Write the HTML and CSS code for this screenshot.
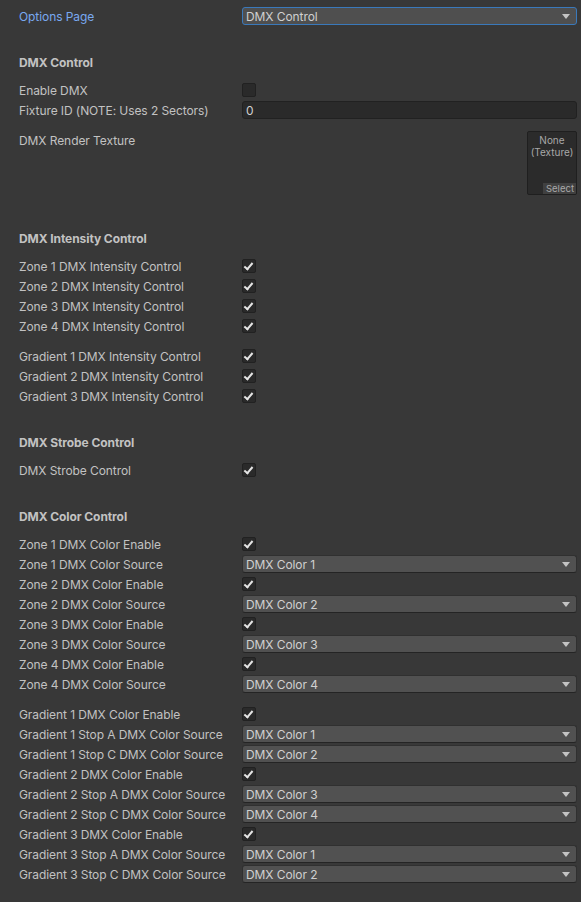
FILE: index.html
```html
<!DOCTYPE html>
<html>
<head>
<meta charset="utf-8">
<link rel="stylesheet" href="styles.css">
</head>
<body>
<div class="inspector">
  <div class="row">
    <span class="lbl focus">Options Page</span>
    <div class="dropdown focused">DMX Control<span class="arrow"></span></div>
  </div>

  <div class="header">DMX Control</div>
  <div class="row"><span class="lbl">Enable DMX</span><span class="check"></span></div>
  <div class="row"><span class="lbl">Fixture ID (NOTE: Uses 2 Sectors)</span><div class="textfield">0</div></div>
  <div class="row tex-row gap">
    <span class="lbl">DMX Render Texture</span>
    <div class="texfield">
      <div class="texname">None<br>(Texture)</div>
      <div class="texselect">Select</div>
    </div>
  </div>

  <div class="header after-tex">DMX Intensity Control</div>
  <div class="row"><span class="lbl">Zone 1 DMX Intensity Control</span><span class="check on"></span></div>
  <div class="row"><span class="lbl">Zone 2 DMX Intensity Control</span><span class="check on"></span></div>
  <div class="row"><span class="lbl">Zone 3 DMX Intensity Control</span><span class="check on"></span></div>
  <div class="row"><span class="lbl">Zone 4 DMX Intensity Control</span><span class="check on"></span></div>
  <div class="row gap"><span class="lbl">Gradient 1 DMX Intensity Control</span><span class="check on"></span></div>
  <div class="row"><span class="lbl">Gradient 2 DMX Intensity Control</span><span class="check on"></span></div>
  <div class="row"><span class="lbl">Gradient 3 DMX Intensity Control</span><span class="check on"></span></div>

  <div class="header">DMX Strobe Control</div>
  <div class="row"><span class="lbl">DMX Strobe Control</span><span class="check on"></span></div>

  <div class="header">DMX Color Control</div>
  <div class="row"><span class="lbl">Zone 1 DMX Color Enable</span><span class="check on"></span></div>
  <div class="row"><span class="lbl">Zone 1 DMX Color Source</span><div class="dropdown">DMX Color 1<span class="arrow"></span></div></div>
  <div class="row"><span class="lbl">Zone 2 DMX Color Enable</span><span class="check on"></span></div>
  <div class="row"><span class="lbl">Zone 2 DMX Color Source</span><div class="dropdown">DMX Color 2<span class="arrow"></span></div></div>
  <div class="row"><span class="lbl">Zone 3 DMX Color Enable</span><span class="check on"></span></div>
  <div class="row"><span class="lbl">Zone 3 DMX Color Source</span><div class="dropdown">DMX Color 3<span class="arrow"></span></div></div>
  <div class="row"><span class="lbl">Zone 4 DMX Color Enable</span><span class="check on"></span></div>
  <div class="row"><span class="lbl">Zone 4 DMX Color Source</span><div class="dropdown">DMX Color 4<span class="arrow"></span></div></div>

  <div class="row gap"><span class="lbl">Gradient 1 DMX Color Enable</span><span class="check on"></span></div>
  <div class="row"><span class="lbl">Gradient 1 Stop A DMX Color Source</span><div class="dropdown">DMX Color 1<span class="arrow"></span></div></div>
  <div class="row"><span class="lbl">Gradient 1 Stop C DMX Color Source</span><div class="dropdown">DMX Color 2<span class="arrow"></span></div></div>
  <div class="row"><span class="lbl">Gradient 2 DMX Color Enable</span><span class="check on"></span></div>
  <div class="row"><span class="lbl">Gradient 2 Stop A DMX Color Source</span><div class="dropdown">DMX Color 3<span class="arrow"></span></div></div>
  <div class="row"><span class="lbl">Gradient 2 Stop C DMX Color Source</span><div class="dropdown">DMX Color 4<span class="arrow"></span></div></div>
  <div class="row"><span class="lbl">Gradient 3 DMX Color Enable</span><span class="check on"></span></div>
  <div class="row"><span class="lbl">Gradient 3 Stop A DMX Color Source</span><div class="dropdown">DMX Color 1<span class="arrow"></span></div></div>
  <div class="row"><span class="lbl">Gradient 3 Stop C DMX Color Source</span><div class="dropdown">DMX Color 2<span class="arrow"></span></div></div>
</div>
</body>
</html>
```

FILE: styles.css
```css
html, body {
  margin: 0;
  padding: 0;
  background: #383838;
  height: 100%;
}
body {
  font-family: Inter, "Noto Sans", sans-serif;
  font-size: 12px;
  letter-spacing: -0.08px;
  color: #c2c2c2;
}
.inspector {
  display: flex;
  flex-direction: column;
  padding: 7px 4px 0 19px;
}
.row {
  display: flex;
  align-items: center;
  height: 18px;
  margin-top: 2px;
}
.inspector > .row:first-child { margin-top: 0; }
.lbl {
  width: 223px;
  flex: none;
  height: 18px;
  line-height: 20px;
  white-space: nowrap;
}
.lbl.focus { color: #79a9f0; }
.header {
  height: 18px;
  line-height: 20px;
  font-weight: 700;
  margin-top: 28px;
}
.header.after-tex { margin-top: 34px; }
.header + .row { margin-top: 10px; }
.row.gap { margin-top: 12px; }

.check {
  width: 12px;
  height: 12px;
  border: 1px solid #212121;
  border-radius: 2px;
  background: #2a2a2a;
  position: relative;
  box-sizing: content-box;
}
.check.on::after {
  content: "";
  position: absolute;
  left: 3px;
  top: 1px;
  width: 3px;
  height: 7px;
  border-right: 2px solid #e4e4e4;
  border-bottom: 2px solid #e4e4e4;
  transform: rotate(40deg);
  transform-origin: center;
}
.dropdown {
  flex: 1;
  height: 18px;
  box-sizing: border-box;
  background: #515151;
  border: 1px solid #303030;
  border-bottom-color: #242424;
  border-radius: 3px;
  padding-left: 3px;
  line-height: 17px;
  position: relative;
  color: #d0d0d0;
}
.dropdown.focused {
  border-color: #3a79bb;
  background: #4f4f4f;
}
.arrow {
  position: absolute;
  right: 6px;
  top: 6px;
  width: 0;
  height: 0;
  border-left: 4px solid transparent;
  border-right: 4px solid transparent;
  border-top: 5px solid #c4c4c4;
}
.textfield {
  flex: 1;
  height: 18px;
  box-sizing: border-box;
  background: #2a2a2a;
  border: 1px solid #212121;
  border-radius: 3px;
  padding-left: 3px;
  line-height: 17px;
  color: #d0d0d0;
}
.tex-row {
  height: 64px;
  align-items: flex-start;
}
.tex-row .lbl { flex: 1; }
.texfield {
  width: 50px;
  height: 64px;
  box-sizing: border-box;
  background: #2b2b2b;
  border: 1px solid #1f1f1f;
  border-radius: 2px;
  display: flex;
  flex-direction: column;
  justify-content: space-between;
  align-items: center;
  font-size: 10px;
  letter-spacing: 0;
  color: #a8a8a8;
  overflow: hidden;
}
.texname {
  text-align: center;
  line-height: 12px;
  padding-top: 2px;
}
.texselect {
  align-self: flex-end;
  background: #404040;
  color: #a8a8a8;
  line-height: 11px;
  height: 11px;
  padding: 0 2px 0 3px;
  font-size: 9.5px;
}
```
